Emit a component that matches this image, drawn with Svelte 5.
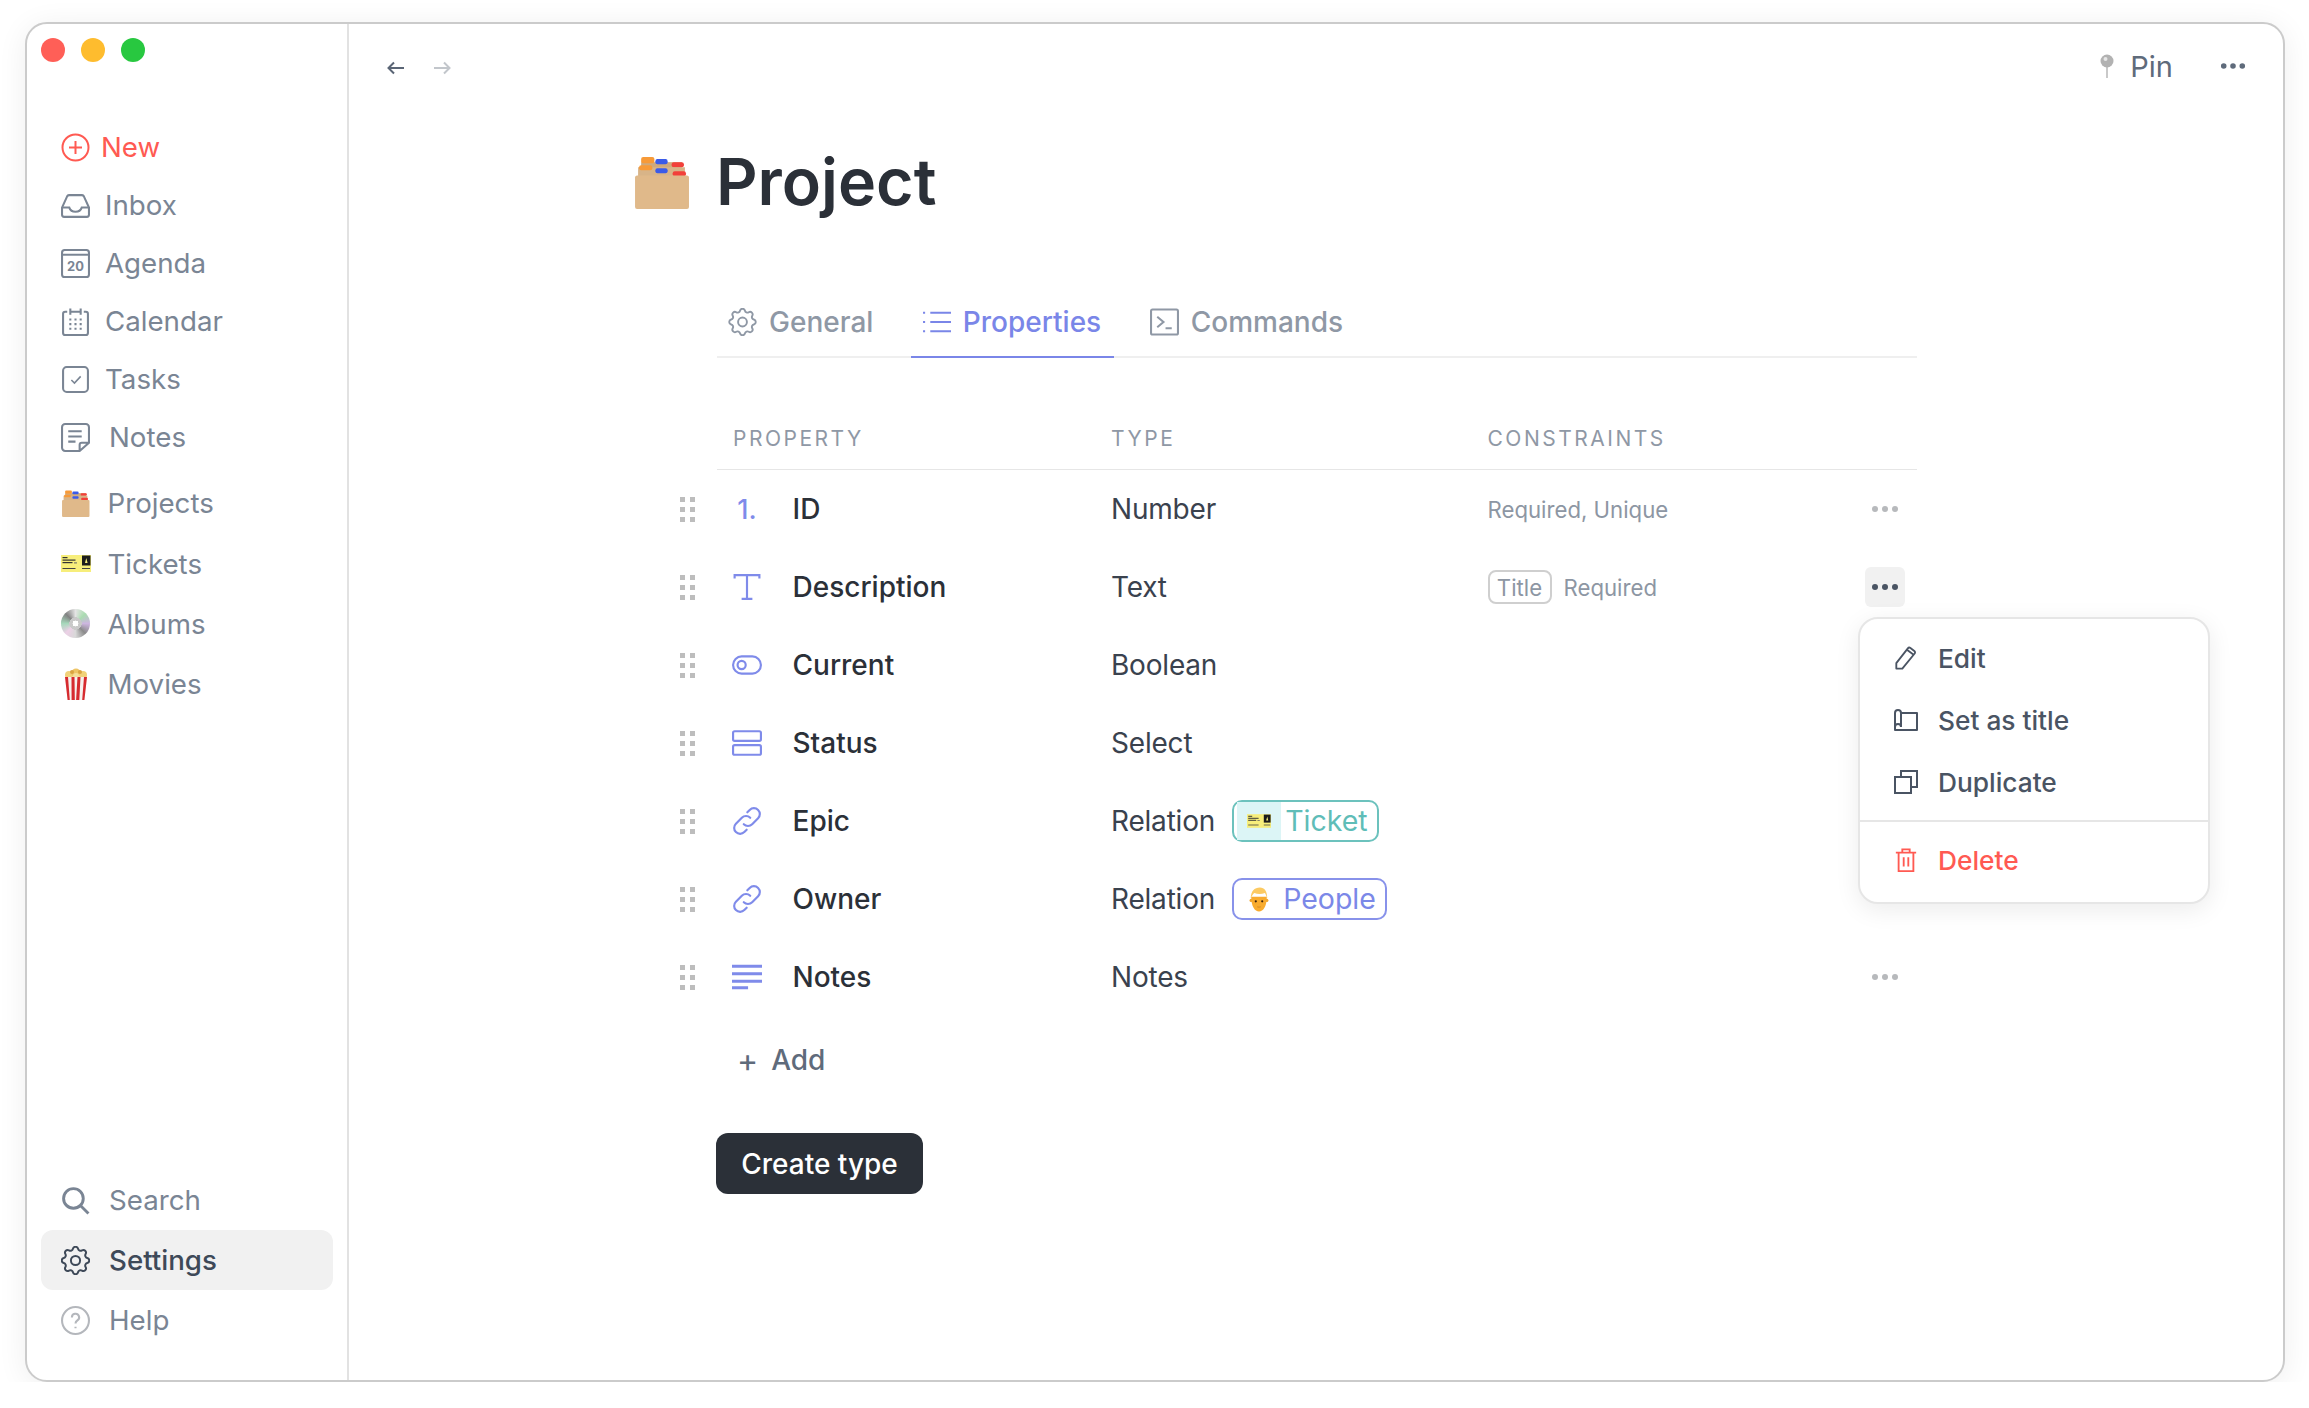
<script>
  const rows = [
    { icon: "number", name: "ID", type: "Number", required: "Required, Unique", more: "idle" },
    { icon: "text", name: "Description", type: "Text", title: true, required: "Required", more: "open" },
    { icon: "toggle", name: "Current", type: "Boolean" },
    { icon: "select", name: "Status", type: "Select" },
    { icon: "link", name: "Epic", type: "Relation", relation: "ticket" },
    { icon: "link", name: "Owner", type: "Relation", relation: "people" },
    { icon: "lines", name: "Notes", type: "Notes", more: "idle" },
  ];
</script>

{#snippet cardbox()}
  <svg viewBox="0 0 56 52" class="fill">
    <rect x="8" y="6" width="40" height="20" fill="#cfa97c" />
    <rect x="5" y="3" width="13" height="6" rx="2" fill="#f79a38" transform="translate(3 -2)" />
    <rect x="22" y="3" width="12" height="5" rx="2" fill="#3b5be8" />
    <rect x="38" y="6" width="12" height="5" rx="2" fill="#f2403a" />
    <rect x="5" y="11" width="46" height="14" fill="#d8b488" />
    <rect x="6" y="9" width="13" height="5" rx="2" fill="#f79a38" />
    <rect x="22" y="12" width="12" height="5" rx="2" fill="#3b5be8" />
    <rect x="39" y="15" width="13" height="5" rx="2" fill="#f2403a" />
    <rect x="2" y="19" width="53" height="33" rx="2" fill="#e0b98a" />
  </svg>
{/snippet}

{#snippet ticket()}
  <svg viewBox="0 0 30 17" class="fill">
    <rect width="30" height="17" fill="#f7ee7b" />
    <rect x="21" y="0.5" width="8.5" height="10" fill="#1c1c1c" />
    <path d="M24 8l1.3-5 1.3 5z" fill="#f7ee7b" />
    <rect x="1.5" y="2" width="5" height="1.2" fill="#333" />
    <rect x="1.5" y="4.5" width="13" height="1.2" fill="#333" />
    <rect x="1.5" y="7" width="10" height="1.2" fill="#333" />
    <rect x="13" y="7.4" width="3" height="1" fill="#666" />
    <rect x="1.5" y="13" width="13" height="1" fill="#444" />
    <rect x="21" y="13" width="8" height="1" fill="#444" />
  </svg>
{/snippet}

{#snippet popcorn()}
  <svg viewBox="2 0 24 32" class="fill">
    <circle cx="7" cy="7" r="4" fill="#f1d27a" />
    <circle cx="14" cy="5" r="4.5" fill="#eec566" />
    <circle cx="21" cy="7" r="4" fill="#f1d27a" />
    <circle cx="10" cy="4" r="2" fill="#d9a441" />
    <circle cx="18" cy="4" r="2" fill="#d9a441" />
    <circle cx="14" cy="8" r="3" fill="#f5df9a" />
    <path d="M3 9h22l-2.6 23H5.6z" fill="#f6f1ee" />
    <path d="M3 9h3l1.800 23H5.600zM9.500 9h3l.3 23H9.600zM15.500 9h3l-1.200 23h-3.200zM22 9h3l-2.600 23h-2.200z" fill="#d62b2f" />
  </svg>
{/snippet}

{#snippet person()}
  <svg viewBox="0 0 24 26" class="fill">
    <circle cx="3.500" cy="14" r="1.800" fill="#f0a42c" />
    <circle cx="20.500" cy="14" r="1.800" fill="#f0a42c" />
    <path d="M3.500 10c0 11 4 16 8.500 16s8.500-5 8.500-16z" fill="#f8ab2e" />
    <path d="M3 12C3 4 7 0 13 0c5 0 8 4 8 12-.8-2.500-1.500-4-2.500-6-4 1.500-8 1.500-11.500 0-2 1.500-3 3.500-4 6z" fill="#fcca62" />
    <circle cx="8.500" cy="15" r="1.200" fill="#3e2410" />
    <circle cx="15.500" cy="15" r="1.200" fill="#3e2410" />
    <path d="M10 21c1.300.5 2.700.5 4 0" stroke="#c77a22" stroke-width="0.700" fill="none" />
  </svg>
{/snippet}

{#snippet gear()}
  <svg viewBox="2.500 2.500 19 19" class="line gear">
    <path d="M10.325 4.317c.426-1.756 2.924-1.756 3.35 0a1.724 1.724 0 002.573 1.066c1.543-.94 3.31.826 2.37 2.37a1.724 1.724 0 001.065 2.572c1.756.426 1.756 2.924 0 3.35a1.724 1.724 0 00-1.066 2.573c.94 1.543-.826 3.31-2.37 2.37a1.724 1.724 0 00-2.572 1.065c-.426 1.756-2.924 1.756-3.35 0a1.724 1.724 0 00-2.573-1.066c-1.543.94-3.31-.826-2.37-2.37a1.724 1.724 0 00-1.065-2.572c-1.756-.426-1.756-2.924 0-3.35a1.724 1.724 0 001.066-2.573c-.94-1.543.826-3.31 2.37-2.37.996.608 2.296.07 2.572-1.065z" />
    <circle cx="12" cy="12" r="3" />
  </svg>
{/snippet}

{#snippet dots()}
  <svg viewBox="0 0 28 8" class="dots"><circle cx="4" cy="4" r="3" /><circle cx="14" cy="4" r="3" /><circle cx="24" cy="4" r="3" /></svg>
{/snippet}

{#snippet rowicon(kind)}
  {#if kind === "number"}
    <span class="num">1.</span>
  {:else if kind === "text"}
    <svg viewBox="0 0 26 26" class="line"><path d="M1.500 5V2h23v3M13 2v22M8 24h10" /></svg>
  {:else if kind === "toggle"}
    <svg viewBox="0 0 28 18" class="line"><rect x="1" y="1" width="26" height="16" rx="8" /><circle cx="9" cy="9" r="3.800" /></svg>
  {:else if kind === "select"}
    <svg viewBox="0 0 28 24" class="line"><rect x="1" y="1" width="26" height="9" rx="1.500" /><rect x="1" y="14" width="26" height="9" rx="1.500" /></svg>
  {:else if kind === "link"}
    <svg viewBox="1 1 26 26" class="line chain"><path d="M17 11a5.500 5.500 0 0 0-7.800 0l-5.500 5.500a5.500 5.500 0 0 0 7.800 7.800l2.200-2.200M11 17a5.500 5.500 0 0 0 7.800 0l5.500-5.500a5.500 5.500 0 0 0-7.800-7.800l-2.200 2.200" stroke-linecap="round" stroke-linejoin="round" /></svg>
  {:else}
    <svg viewBox="0 0 28 24" class="line thick"><path d="M0 2h28M0 9h28M0 16h28M0 22h15" /></svg>
  {/if}
{/snippet}

<div class="window">
  <aside class="sidebar">
    <div class="lights"><i class="red"></i><i class="amber"></i><i class="green"></i></div>

    <nav class="group first">
      <a class="item new gap-s">
        <span class="ic"><svg viewBox="0 0 29 29" class="line"><circle cx="14.500" cy="14.500" r="13" /><path d="M14.500 8v13M8 14.500h13" /></svg></span>New
      </a>
      <a class="item gap-m">
        <span class="ic"><svg viewBox="0 0 28 24" class="line"><path d="M1 14 6 3a2.500 2.500 0 0 1 2-1h12a2.500 2.500 0 0 1 2 1l5 11v7a2 2 0 0 1-2 2H3a2 2 0 0 1-2-2z" /><path d="M1 14h7c1 3 3 4 6 4s5-1 6-4h7" /></svg></span>Inbox
      </a>
      <a class="item gap-m">
        <span class="ic"><svg viewBox="0 0 28 28" class="line"><rect x="1" y="1" width="26" height="26" rx="2.500" /><path d="M1 5.500h26" /><text x="14" y="21" class="cal">20</text></svg></span>Agenda
      </a>
      <a class="item gap-m">
        <span class="ic"><svg viewBox="0 0 28 28" class="line"><path d="M6 4.500H4a2 2 0 0 0-2 2V25a2 2 0 0 0 2 2h20a2 2 0 0 0 2-2V6.500a2 2 0 0 0-2-2h-2M9 4.500h10M9 1.500v6M19 1.500v6" /><path d="M8 12h2M13 12h2M18 12h2M8 16.500h2M13 16.500h2M18 16.500h2M8 21h2M13 21h2M18 21h2" stroke-width="2" /></svg></span>Calendar
      </a>
      <a class="item gap-m">
        <span class="ic"><svg viewBox="0 0 28 28" class="line"><rect x="2" y="2" width="24" height="24" rx="3.500" /><path d="M10 14.500l3 3 6-6.500" stroke-width="1.500" /></svg></span>Tasks
      </a>
      <a class="item gap-l">
        <span class="ic"><svg viewBox="0 0 28 28" class="line"><path d="M18 27H4a3 3 0 0 1-3-3V4a3 3 0 0 1 3-3h20a3 3 0 0 1 3 3v15zM18 27v-6a2 2 0 0 1 2-2h7M7 8h13M7 13h13M7 18h7" /></svg></span>Notes
      </a>
    </nav>

    <nav class="group emoji">
      <a class="item gap-e"><span class="ic"><span class="card-ic">{@render cardbox()}</span></span>Projects</a>
      <a class="item gap-e"><span class="ic"><span class="ticket-ic">{@render ticket()}</span></span>Tickets</a>
      <a class="item gap-e"><span class="ic"><span class="cd"></span></span>Albums</a>
      <a class="item gap-e"><span class="ic"><span class="pop-ic">{@render popcorn()}</span></span>Movies</a>
    </nav>

    <nav class="group bottom">
      <a class="item gap-l">
        <span class="ic"><svg viewBox="0 0 28 28" class="line thick"><circle cx="12" cy="12" r="9.500" /><path d="M19 19l7.500 7.500" /></svg></span>Search
      </a>
      <a class="item gap-l active"><span class="ic">{@render gear()}</span>Settings</a>
      <a class="item gap-l">
        <span class="ic"><svg viewBox="0 0 28 28" class="line help"><circle cx="14" cy="14" r="13" /><path d="M10.500 11a3.500 3.500 0 1 1 5.200 3c-1.200.7-1.700 1.300-1.700 3" /><path d="M14 20v1.500" /></svg></span>Help
      </a>
    </nav>
  </aside>

  <main class="main">
    <header class="topbar">
      <div class="arrows">
        <svg viewBox="0 0 18 14" class="line"><path d="M17 7H1.500M7 1.500 1.500 7 7 12.500" /></svg>
        <svg viewBox="0 0 18 14" class="line faint"><path d="M1 7h15.500M11 1.500 16.500 7 11 12.500" /></svg>
      </div>
      <div class="actions">
        <span class="pin">
          <svg viewBox="0 0 14 24" class="fill"><path d="M7 11v13" stroke="#c9c9c9" stroke-width="2" /><circle cx="7" cy="7" r="6.500" fill="#b2b2b2" /><circle cx="5.500" cy="5" r="2" fill="#e6e6e6" /></svg>
          Pin
        </span>
        <span class="top-dots">{@render dots()}</span>
      </div>
    </header>

    <div class="title">
      <span class="title-ic">{@render cardbox()}</span>
      <h1>Project</h1>
    </div>

    <section class="content">
      <div class="tabs">
        <a class="tab">
          <span class="tab-ic">{@render gear()}</span>General
        </a>
        <a class="tab selected">
          <span class="tab-ic"><svg viewBox="0 0 28 24" class="line"><path d="M8 3h20M8 12h20M8 21h20M1 3h2M1 12h2M1 21h2" /></svg></span>Properties
        </a>
        <a class="tab">
          <span class="tab-ic"><svg viewBox="0 0 28 26" class="line"><rect x="1" y="1" width="26" height="24" rx="1.500" /><path d="M7 8l6 5-6 5M15 19h6" /></svg></span>Commands
        </a>
      </div>

      <div class="thead">
        <span>PROPERTY</span><span>TYPE</span><span>CONSTRAINTS</span>
      </div>

      <div class="rows">
        {#each rows as row}
          <div class="row">
            <span class="grip">{#each Array(6) as _}<i></i>{/each}</span>
            <span class="row-ic">{@render rowicon(row.icon)}</span>
            <span class="name">{row.name}</span>
            <span class="type">
              {row.type}
              {#if row.relation === "ticket"}
                <span class="badge teal"><span class="tint"><span class="mini-ticket">{@render ticket()}</span></span><span class="badge-label">Ticket</span></span>
              {:else if row.relation === "people"}
                <span class="badge violet"><span class="mini-person">{@render person()}</span><span class="badge-label">People</span></span>
              {/if}
            </span>
            <span class="constraints">
              {#if row.title}<span class="chip">Title</span>{/if}
              {#if row.required}{row.required}{/if}
            </span>
            <span class="more-cell">
              {#if row.more}
                <span class="more" class:open={row.more === "open"}>{@render dots()}</span>
              {/if}
              {#if row.more === "open"}
                <div class="menu">
                  <a class="menu-item">
                    <svg viewBox="0 0 24 26" class="line"><path d="M1.500 24.500v-6L14 2.500a2 2 0 0 1 2.800-.4l4.200 3.200a2 2 0 0 1 .4 2.800L8 24.500zM13 4l8 6" stroke-linejoin="round" /></svg>
                    Edit
                  </a>
                  <a class="menu-item">
                    <svg viewBox="0 0 24 22" class="line"><path d="M1 4a3 3 0 0 1 6 0h16v17H1zM1 4v17M7 4v13.500M1 18a3 3 0 0 1 6 0" stroke-linejoin="round" /></svg>
                    Set as title
                  </a>
                  <a class="menu-item">
                    <svg viewBox="0 0 24 24" class="line"><rect x="1" y="7" width="16" height="16" /><path d="M7 7V1h16v16h-6" /></svg>
                    Duplicate
                  </a>
                  <div class="divider"></div>
                  <a class="menu-item danger">
                    <svg viewBox="0 0 22 26" class="line"><path d="M0 5h22M7 5V1.500h8V5M3 5v20h16V5M8.500 10v10M13.500 10v10" /></svg>
                    Delete
                  </a>
                </div>
              {/if}
            </span>
          </div>
        {/each}
      </div>

      <a class="add"><span class="plus">+</span>Add</a>
      <button class="create">Create type</button>
    </section>
  </main>
</div>

<style>
  :global(body) {
    background: #fff;
    font-family: Inter, "Liberation Sans", sans-serif;
    color: #2b3038;
  }

  svg {
    display: block;
    width: 100%;
    height: 100%;
  }

  .line {
    fill: none;
    stroke: currentColor;
    stroke-width: 2;
  }

  .line.thick {
    stroke-width: 2.8;
  }

  .line.gear {
    stroke-width: 1.300;
  }

  .line.chain {
    stroke-width: 2;
  }

  .dots {
    fill: currentColor;
  }

  .window {
    box-sizing: border-box;
    display: flex;
    width: 2260px;
    height: 1360px;
    margin: 22px 0 0 25px;
    border: 2px solid #cbcbcb;
    border-radius: 22px;
    box-shadow: 0 4px 30px rgba(0, 0, 0, 0.07);
    background: #fff;
    overflow: hidden;
  }

  .sidebar {
    box-sizing: border-box;
    width: 322px;
    flex: none;
    display: flex;
    flex-direction: column;
    padding: 0 14px 30px 14px;
    border-right: 2px solid #e2e2e2;
  }

  .lights {
    display: flex;
    gap: 16px;
    height: 94px;
    padding: 14px 0 0 0;
    box-sizing: border-box;
  }

  .lights i {
    width: 24px;
    height: 24px;
    border-radius: 50%;
  }

  .red { background: #ff5f57; }
  .amber { background: #febc2e; }
  .green { background: #28c840; }

  .group {
    display: flex;
    flex-direction: column;
  }

  .first .item {
    height: 58px;
  }

  .emoji {
    margin-top: 7px;
  }

  .emoji .item {
    height: 60.4px;
  }

  .bottom {
    margin-top: auto;
  }

  .bottom .item {
    height: 60px;
  }

  .item {
    display: flex;
    align-items: center;
    padding-left: 20px;
    border-radius: 12px;
    font-size: 27.700px;
    color: #7a8594;
  }

  .gap-s { gap: 11px; }
  .gap-m { gap: 15px; }
  .gap-l { gap: 19px; }
  .gap-e { gap: 17.500px; }

  .ic {
    width: 29px;
    height: 29px;
    flex: none;
    display: flex;
    align-items: center;
    justify-content: center;
  }

  .new {
    color: #ff5a52;
  }

  .cal {
    fill: currentColor;
    stroke: none;
    font-size: 12.500px;
    font-weight: 700;
    text-anchor: middle;
  }

  .help {
    color: #b4b7bc;
  }

  .card-ic {
    width: 29px;
    height: 27px;
    flex: none;
  }

  .ticket-ic {
    width: 30px;
    height: 17px;
    flex: none;
  }

  .cd {
    width: 29px;
    height: 29px;
    flex: none;
    border-radius: 50%;
    background:
      radial-gradient(circle, #fff 0 14%, #c9c9c9 15% 30%, transparent 31%),
      conic-gradient(#e4e4e4, #a9dcb0, #cdb6e0, #8b8b8b, #d8d8d8, #ecd0e6, #a6d8bb, #828282, #e4e4e4);
  }

  .pop-ic {
    width: 24px;
    height: 32px;
    flex: none;
  }

  .active {
    background: #f1f1f1;
    color: #3e4958;
    font-weight: 500;
  }

  .main {
    flex: 1;
    min-width: 0;
    display: flex;
    flex-direction: column;
  }

  .topbar {
    height: 84px;
    flex: none;
    display: flex;
    align-items: center;
    justify-content: space-between;
    padding: 0 37px 0 38px;
  }

  .arrows {
    display: flex;
    gap: 28px;
    padding-top: 3px;
    color: #5a6575;
  }

  .arrows svg {
    width: 18px;
    height: 14px;
  }

  .faint {
    color: #c2c6cb;
  }

  .actions {
    display: flex;
    align-items: center;
    gap: 47px;
  }

  .pin {
    display: flex;
    align-items: center;
    gap: 16px;
    font-size: 29px;
    color: #5f6b7b;
  }

  .pin svg {
    width: 14px;
    height: 24px;
  }

  .top-dots {
    width: 26px;
    height: 8px;
    color: #5f6b7b;
  }

  .title {
    height: 148px;
    flex: none;
    display: flex;
    align-items: center;
    gap: 26px;
    padding-left: 284px;
  }

  .title-ic {
    width: 57px;
    height: 53px;
  }

  h1 {
    margin: 0;
    font-size: 64.500px;
    font-weight: 600;
    color: #2b3038;
  }

  .content {
    width: 1200px;
    margin-left: 368px;
  }

  .tabs {
    display: flex;
    height: 102px;
    align-items: flex-end;
    box-sizing: border-box;
    border-bottom: 2px solid #efefef;
    font-size: 28px;
    font-weight: 500;
    color: #8f98a5;
  }

  .tab {
    display: flex;
    align-items: center;
    gap: 12px;
    height: 70px;
    margin-bottom: -2px;
    padding: 0 13px 0 11px;
    box-sizing: border-box;
    border-bottom: 2px solid transparent;
    margin-right: 24.500px;
  }

  .tab-ic {
    width: 29px;
    height: 28px;
    flex: none;
  }

  .selected {
    color: #7a86e8;
    border-bottom-color: #7a86e8;
  }

  .thead {
    display: grid;
    grid-template-columns: 378px 376.500px 1fr;
    align-items: center;
    height: 62px;
    margin-top: 49px;
    padding-left: 16px;
    border-bottom: 1px solid #e6e6e6;
    font-size: 21px;
    letter-spacing: 2.500px;
    color: #8f98a5;
  }

  .row {
    display: grid;
    grid-template-columns: 52px 60.500px 318.500px 376.500px 377.500px 40px;
    align-items: center;
    height: 78px;
    margin-left: -37px;
    font-size: 28px;
  }

  .grip {
    display: grid;
    grid-template-columns: 5px 5px;
    grid-auto-rows: 5px;
    gap: 5px;
    justify-content: start;
  }

  .grip i {
    background: #bdbdbd;
  }

  .row-ic {
    width: 30px;
    height: 28px;
    display: flex;
    align-items: center;
    justify-content: center;
    color: #7f8bea;
  }

  .num {
    font-size: 27px;
    font-weight: 500;
  }

  .name {
    font-weight: 500;
  }

  .type {
    display: flex;
    align-items: center;
    gap: 17px;
    color: #3a424e;
    letter-spacing: -0.200px;
  }

  .badge {
    box-sizing: border-box;
    display: flex;
    align-items: center;
    height: 42px;
    border: 2px solid;
    border-radius: 10px;
    font-size: 28.500px;
    letter-spacing: 0;
  }

  .badge-label {
    padding-bottom: 2px;
  }

  .teal {
    width: 147px;
    color: #5fbdb8;
    border-color: #6cc2bd;
    gap: 4px;
    padding-left: 3px;
  }

  .tint {
    width: 44px;
    height: 38px;
    display: flex;
    align-items: center;
    justify-content: center;
    background: #dcf5f6;
  }

  .mini-ticket {
    width: 24px;
    height: 14px;
  }

  .violet {
    width: 155px;
    color: #7b88e8;
    border-color: #8892ea;
    gap: 13px;
    padding-left: 14px;
  }

  .mini-person {
    width: 22px;
    height: 25px;
    flex: none;
  }

  .constraints {
    display: flex;
    align-items: center;
    gap: 12px;
    font-size: 22.200px;
    color: #8d96a3;
  }

  .chip {
    box-sizing: border-box;
    display: flex;
    align-items: center;
    justify-content: center;
    width: 64px;
    height: 34px;
    border: 2px solid #cfcfcf;
    border-radius: 8px;
  }

  .more-cell {
    position: relative;
    width: 40px;
    height: 40px;
  }

  .more {
    box-sizing: border-box;
    display: flex;
    width: 40px;
    height: 40px;
    padding: 16px 6px;
    border-radius: 6px;
    color: #b7b9bc;
  }

  .more.open {
    background: #f1f1f1;
    color: #4a5463;
  }

  .menu {
    position: absolute;
    z-index: 2;
    top: 50px;
    left: -7px;
    box-sizing: border-box;
    width: 352px;
    height: 287px;
    padding-top: 8px;
    background: #fff;
    border: 2px solid #e6e6e6;
    border-radius: 20px;
    box-shadow: 0 6px 24px rgba(0, 0, 0, 0.08);
  }

  .menu-item {
    display: flex;
    align-items: center;
    gap: 20px;
    height: 62px;
    padding-left: 34px;
    font-size: 26.300px;
    font-weight: 500;
    color: #4a5463;
  }

  .menu-item svg {
    width: 24px;
    height: 24px;
    flex: none;
  }

  .divider {
    height: 2px;
    margin: 7px 0 7px;
    background: #e6e6e6;
  }

  .danger {
    color: #ff5a52;
  }

  .add {
    display: flex;
    align-items: center;
    gap: 13px;
    height: 68px;
    margin-top: 10px;
    padding-left: 20px;
    font-size: 28px;
    font-weight: 500;
    color: #5f6b7b;
  }

  .plus {
    font-size: 32px;
    font-weight: 400;
  }

  .create {
    display: block;
    width: 207px;
    height: 61px;
    margin-top: 39px;
    margin-left: -1px;
    border: none;
    border-radius: 12px;
    background: #2b3038;
    color: #fff;
    font-family: inherit;
    font-size: 28px;
    font-weight: 500;
  }
</style>
